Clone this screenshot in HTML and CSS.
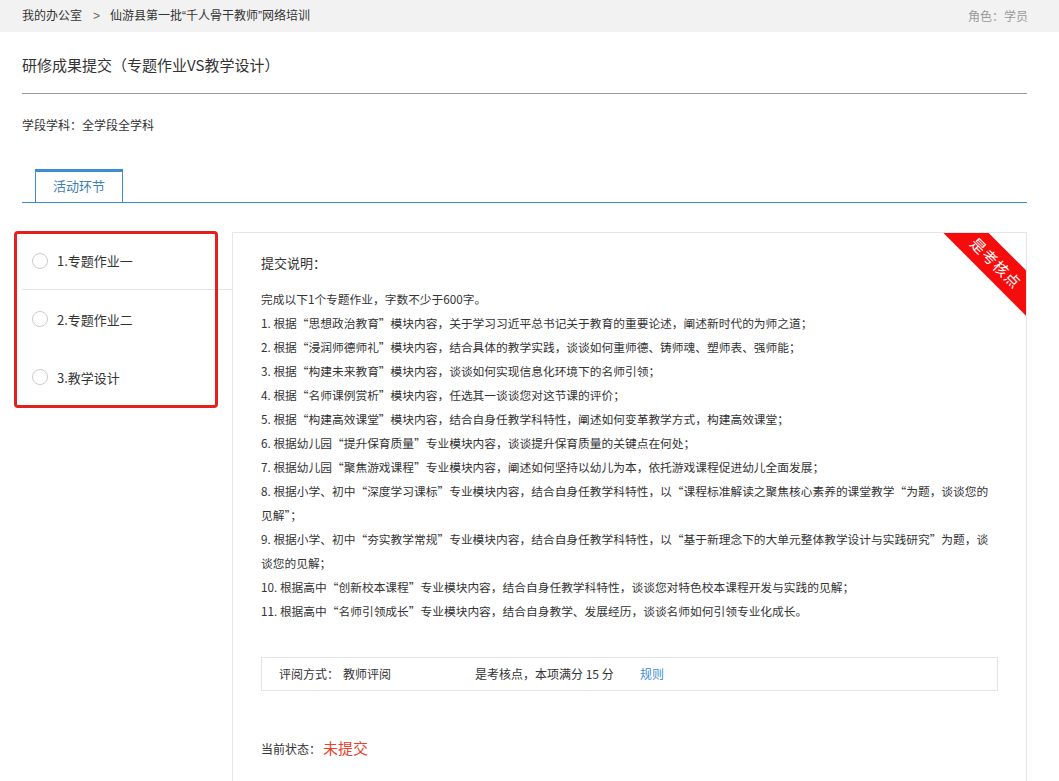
FILE: index.html
```html
<!DOCTYPE html>
<html lang="zh-CN">

<head>
    <meta charset="UTF-8">
    <meta name="viewport" content="width=device-width, initial-scale=1.0">
    <title>研修成果提交</title>
    <link rel="stylesheet" href="styles.css">
</head>

<body>
    <div class="topbar">
        <div class="crumbs">我的办公室<span class="sep">&gt;</span>仙游县第一批“千人骨干教师”网络培训</div>
        <div class="role">角色：学员</div>
    </div>

    <div class="page">
        <h1 class="title">研修成果提交（专题作业VS教学设计）</h1>
        <div class="subject">学段学科：全学段全学科</div>

        <div class="tabs">
            <span class="tab active">活动环节</span>
        </div>

        <div class="main">
            <div class="steps-wrap">
                <ul class="steps">
                    <li class="step first"><span class="dot"></span>1.专题作业一</li>
                    <li class="step"><span class="dot"></span>2.专题作业二</li>
                    <li class="step"><span class="dot"></span>3.教学设计</li>
                </ul>
                <div class="mark"></div>
            </div>

            <div class="panel">
                <div class="ribbon">是考核点</div>
                <div class="panel-title">提交说明：</div>
                <div class="desc">
                    <p>完成以下1个专题作业，字数不少于600字。</p>
                    <p>1. 根据“思想政治教育”模块内容，关于学习习近平总书记关于教育的重要论述，阐述新时代的为师之道；</p>
                    <p>2. 根据“浸润师德师礼”模块内容，结合具体的教学实践，谈谈如何重师德、铸师魂、塑师表、强师能；</p>
                    <p>3. 根据“构建未来教育”模块内容，谈谈如何实现信息化环境下的名师引领；</p>
                    <p>4. 根据“名师课例赏析”模块内容，任选其一谈谈您对这节课的评价；</p>
                    <p>5. 根据“构建高效课堂”模块内容，结合自身任教学科特性，阐述如何变革教学方式，构建高效课堂；</p>
                    <p>6. 根据幼儿园“提升保育质量”专业模块内容，谈谈提升保育质量的关键点在何处；</p>
                    <p>7. 根据幼儿园“聚焦游戏课程”专业模块内容，阐述如何坚持以幼儿为本，依托游戏课程促进幼儿全面发展；</p>
                    <p>8. 根据小学、初中“深度学习课标”专业模块内容，结合自身任教学科特性，以“课程标准解读之聚焦核心素养的课堂教学“为题，谈谈您的见解”；</p>
                    <p>9. 根据小学、初中“夯实教学常规”专业模块内容，结合自身任教学科特性，以“基于新理念下的大单元整体教学设计与实践研究”为题，谈谈您的见解；</p>
                    <p>10. 根据高中“创新校本课程”专业模块内容，结合自身任教学科特性，谈谈您对特色校本课程开发与实践的见解；</p>
                    <p>11. 根据高中“名师引领成长”专业模块内容，结合自身教学、发展经历，谈谈名师如何引领专业化成长。</p>
                </div>

                <div class="review">
                    <span class="rv-way">评阅方式：<span class="rv-val">教师评阅</span></span>
                    <span class="rv-score">是考核点，本项满分 15 分</span>
                    <a class="rv-rule" href="#">规则</a>
                </div>

                <div class="status">当前状态：<span class="status-val">未提交</span></div>
            </div>
        </div>
    </div>
</body>

</html>
```

FILE: styles.css
```css
html,
body {
    margin: 0;
    padding: 0;
    background: #fff;
    color: #333;
    font-family: "Microsoft YaHei", "Noto Sans CJK SC", sans-serif;
    font-size: 12px;
}

.topbar {
    height: 32px;
    line-height: 32px;
    background-color: #f2f2f2;
    padding: 0 31px 0 22px;
    display: flex;
    justify-content: space-between;
}

.crumbs {
    color: #333;
    font-family: "Liberation Sans", "Noto Sans CJK SC", sans-serif;
}

.crumbs .sep {
    margin: 0 10px 0 11px;
    color: #666;
}

.role {
    color: #999;
}

.page {
    padding: 0 32px 0 22px;
}

.title {
    margin: 0;
    padding: 23px 0 18px;
    font-size: 15px;
    font-weight: normal;
    line-height: 20px;
    color: #333;
    border-bottom: 1px solid #999;
}

.subject {
    margin-top: 22px;
    line-height: 18px;
}

.tabs {
    margin-top: 35px;
    padding-left: 13px;
    border-bottom: 1px solid #3b8fd0;
    display: flex;
}

.tab {
    display: block;
    width: 86px;
    height: 30px;
    line-height: 28px;
    text-align: center;
    font-size: 13px;
    color: #3d7fb8;
    border: 1px solid #3b8fd0;
    border-top: 3px solid #3b8fd0;
    border-bottom: none;
}

.main {
    margin-top: 29px;
    display: flex;
    align-items: flex-start;
}

.steps-wrap {
    width: 210px;
    position: relative;
}

.steps {
    list-style: none;
    margin: 0;
    padding: 0;
}

.step {
    height: 58px;
    display: flex;
    align-items: center;
    font-size: 13px;
    color: #333;
    padding-left: 10px;
}

.step.first {
    height: 57px;
    border-bottom: 1px solid #e3e3e3;
}

.dot {
    width: 14px;
    height: 14px;
    border: 1px solid #ccc;
    border-radius: 50%;
    margin-right: 9px;
}

.mark {
    position: absolute;
    left: -8px;
    top: -1px;
    width: 198px;
    height: 171px;
    border: 3px solid #e3201e;
    border-radius: 4px;
}

.panel {
    flex: 1;
    position: relative;
    overflow: hidden;
    border: 1px solid #e6e6e6;
    border-bottom: none;
    padding: 20px 28px 60px;
    min-height: 520px;
}

.ribbon {
    position: absolute;
    top: 14px;
    right: -40px;
    width: 140px;
    height: 32px;
    line-height: 32px;
    background-color: #f50d0d;
    color: #fff;
    text-align: center;
    font-size: 15px;
    letter-spacing: 1px;
    transform: rotate(45deg);
}

.panel-title {
    font-size: 13px;
    line-height: 20px;
}

.desc {
    margin-top: 14px;
    font-size: 11.72px;
    line-height: 24px;
}

.desc p {
    margin: 0;
}

.review {
    margin-top: 34px;
    height: 32px;
    line-height: 32px;
    border: 1px solid #e3e3e3;
    padding-left: 17px;
    display: flex;
}

.rv-way {
    width: 196px;
}

.rv-val {
    margin-left: 4px;
}

.rv-score {
    width: 165px;
}

.rv-rule {
    color: #3b8fd0;
    text-decoration: none;
}

.status {
    margin-top: 47px;
    line-height: 20px;
}

.status-val {
    margin-left: 2px;
    font-size: 15px;
    color: #e8412c;
}
```
